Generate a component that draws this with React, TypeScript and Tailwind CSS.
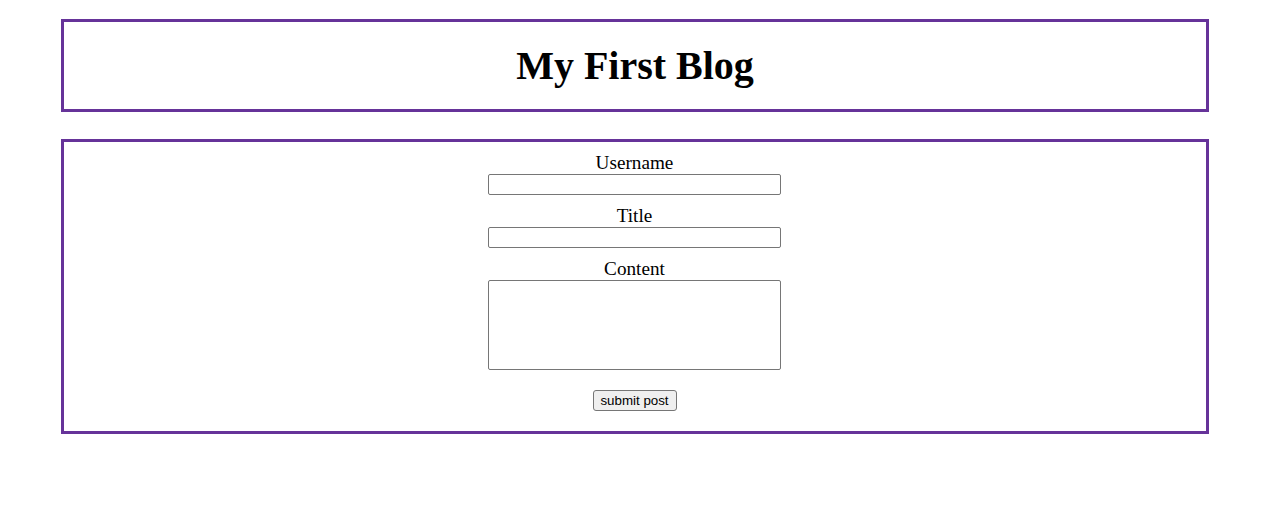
export default function App() {
  return (
    <div className="min-h-[520px] bg-white pt-[19px] font-['Liberation_Serif',serif] text-black">
      {/* header */}
      <header className="ml-[61px] w-[1148px] border-[3px] border-[#663399] pt-[22px] pb-[21px] text-center">
        <h1 className="text-[40px] font-bold leading-[44px]">My First Blog</h1>
      </header>

      {/* post form */}
      <form
        className="mt-[27px] ml-[61px] flex w-[1148px] flex-col items-center border-[3px] border-[#663399] pt-[10px] pr-[1px] pb-[20px]"
        onSubmit={(e) => e.preventDefault()}
      >
        <label htmlFor="username" className="text-[19.2px] leading-[22px]">
          Username
        </label>
        <input
          id="username"
          type="text"
          className="h-[21px] w-[293px] rounded-[2px] border border-[#767676] bg-white"
        />

        <label htmlFor="title" className="mt-[10px] text-[19.2px] leading-[22px]">
          Title
        </label>
        <input
          id="title"
          type="text"
          className="h-[21px] w-[293px] rounded-[2px] border border-[#767676] bg-white"
        />

        <label htmlFor="content" className="mt-[10px] text-[19.2px] leading-[22px]">
          Content
        </label>
        <textarea
          id="content"
          className="h-[90px] w-[293px] resize-none rounded-[2px] border border-[#767676] bg-white"
        />

        <button
          type="submit"
          className="mt-[20px] h-[21px] w-[84px] rounded-[3px] border border-[#767676] bg-[#efefef] font-['Liberation_Sans',Arial,sans-serif] text-[13.33px] leading-[15px]"
        >
          submit post
        </button>
      </form>
    </div>
  );
}
